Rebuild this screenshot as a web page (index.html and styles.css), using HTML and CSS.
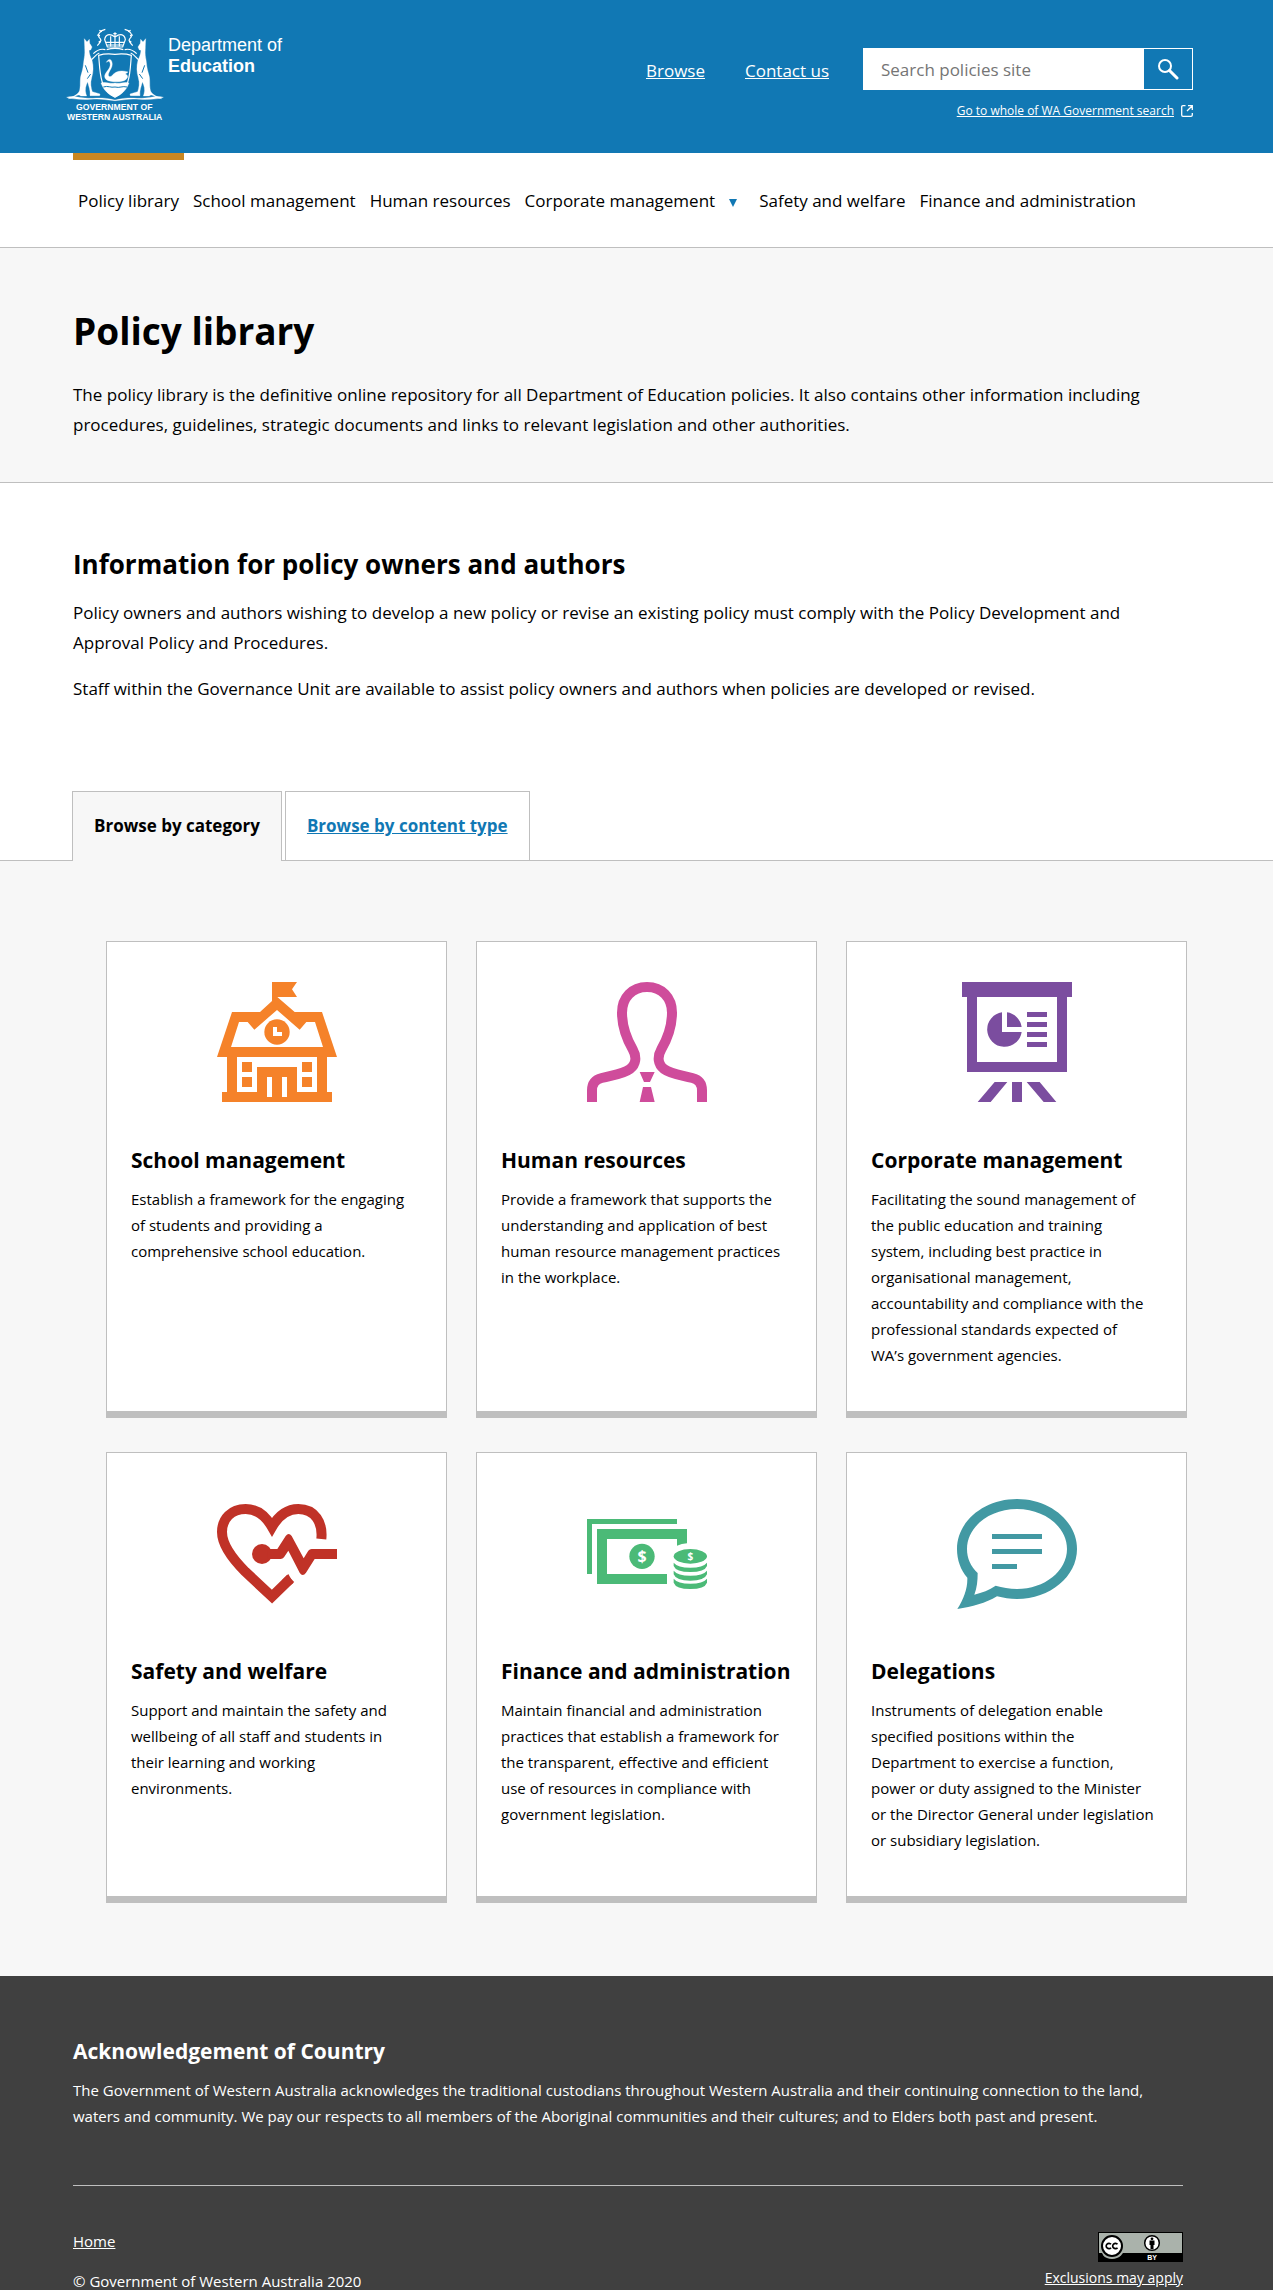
FILE: index.html
```html
<!DOCTYPE html>
<html lang="en">
<head>
<meta charset="utf-8">
<meta name="viewport" content="width=device-width, initial-scale=1">
<title>Policy library - Department of Education</title>
<link rel="stylesheet" href="styles.css">
</head>
<body>
<header class="site-header">
  <a class="brand" href="#" aria-label="Department of Education home">
    <svg class="crest" viewBox="45 50 300 285" fill="none" stroke="#fff">
      <g stroke-width="3.5">
        <path d="M166 57c-18 4-26 18-16 27 8 8-2 14-8 22M156 64l-8-4M150 76l-9-2M154 90l-8 6M224 57c18 4 26 18 16 27-8 8 2 14 8 22M234 64l8-4M240 76l9-2M236 90l8 6"/>
        <path d="M164 88c2-16 14-20 31-8 17-12 29-8 31 8l-8 22h-46zM166 96h58M170 118c16-5 34-5 50 0M172 104h46M195 66v44M182 78v30M208 78v30M190 70h10"/>
        <path d="M146 135c16-5 34-5 49-3 16-2 33-2 49 3-4 46-2 104-49 126-47-22-45-80-49-126z"/>
        <path d="M130 130c12-12 22-16 36-12M260 130c-12-12-22-16-36-12M124 148c8-6 14-16 24-20M266 148c-8-6-14-16-24-20"/>
      </g>
      <g fill="#fff" stroke-width="1">
        <path d="M153 218c20-5 25 4 42 0 17 4 23-5 42 0-8 22-22 35-42 42-20-7-34-20-42-42z"/>
        <path d="M169 208c-10-10-3-18 5-29 8-10 9-20 3-27l-8 4c5-9 12-13 16-3 6 15-5 25-9 36-3 8 1 12 8 9 12-15 27-20 50-13l-8 6c9 4 9 11 1 17-10 9-48 8-58 0z"/>
        <path id="kangaroo" d="M103 85L111 95L118 87L119 99L126 110L122 119L117 120C118 132 121 139 126 150C131 168 130 186 125 202C120 218 123 232 127 244L150 251L149 256L120 256C122 240 116 228 113 214C107 226 104 238 108 251L110 257L92 257C86 251 80 256 70 262L55 265C72 258 85 252 89 240C93 220 88 206 95 188C100 172 100 160 102 148C106 130 104 120 104 108Z"/>
        <use href="#kangaroo" transform="translate(390 0) scale(-1 1)"/>
        <path d="M50 261c20-7 42 4 78 3 36-3 50 2 67 5 17-3 31-8 67-5 36 1 58-10 78-3-15 5-42 8-72 6-30-3-52 3-73 4-21-1-43-7-73-4-30 2-57-1-72-6z"/>
      </g>
      <path d="M160 230c14-5 22 3 35 0 14 4 22-4 36 0M106 165l8 22M112 205l10-14M284 165l-8 22M278 205l-10-14" stroke="#1178b4" stroke-width="3"/>
      <text x="193" y="299" class="crest-text">GOVERNMENT OF</text>
      <text x="194" y="330" class="crest-text">WESTERN AUSTRALIA</text>
    </svg>
    <span class="brand-name">Department of<strong>Education</strong></span>
  </a>
  <div class="header-tools">
    <nav class="header-links" aria-label="Header"><a href="#">Browse</a><a href="#">Contact us</a></nav>
    <div class="search-area">
      <form class="search" role="search">
        <input type="search" placeholder="Search policies site" aria-label="Search policies site">
        <button type="submit" aria-label="Search"><svg width="22" height="22" viewBox="0 0 22 22" fill="none" stroke="#fff"><circle cx="8" cy="8" r="6" stroke-width="2"/><path d="M12.500 12.500L20 20" stroke-width="3" stroke-linecap="round"/></svg></button>
      </form>
      <div class="wider-search"><a href="#">Go to whole of WA Government search</a><svg width="12" height="12" viewBox="0 0 12 12" fill="none" stroke="#fff"><path d="M4.500 .7H2Q.7 .7 .7 2v8q0 1.300 1.300 1.300h8q1.300 0 1.300-1.300V8M7 .7h4.300V5M11.300 .7L6 6" stroke-width="1.300"/></svg></div>
    </div>
  </div>
</header>
<nav class="main-nav" aria-label="Main">
  <a class="current" href="#">Policy library</a><a href="#">School management</a><a href="#">Human resources</a><a href="#">Corporate management<svg class="caret" width="8" height="8" viewBox="0 0 8 8"><path d="M0 0h8L4 8z" fill="#1178b4"/></svg></a><a href="#">Safety and welfare</a><a href="#">Finance and administration</a>
</nav>
<main>
  <section class="intro">
    <h1>Policy library</h1>
    <p>The policy library is the definitive online repository for all Department of Education policies. It also contains other information including procedures, guidelines, strategic documents and links to relevant legislation and other authorities.</p>
  </section>
  <section class="owners">
    <h2>Information for policy owners and authors</h2>
    <p>Policy owners and authors wishing to develop a new policy or revise an existing policy must comply with the Policy Development and Approval Policy and Procedures.</p>
    <p>Staff within the Governance Unit are available to assist policy owners and authors when policies are developed or revised.</p>
  </section>
  <div class="tabs">
    <span class="tab active">Browse by category</span><a class="tab" href="#">Browse by content type</a>
  </div>
  <section class="cards">
    <article class="card">
      <svg class="icon" viewBox="78 66 360 360" fill="#f58229"><path fill-rule="evenodd" d="M243 66h75l-15 22 15 23h-59l52 45h82l45 135h-30v105h15v30H93v-30h15V291H78l45-135h84l36-33zM144 186l-24 75h276l-24-75h-26l-20 23-68-59-68 59-20-23zM138 291v105h60v-75h120v75h60V291z"/><path d="M153 306h30v30h-30zM153 351h30v30h-30zM333 306h30v30h-30zM333 351h30v30h-30z"/><circle cx="258" cy="216" r="38"/><path fill="#fff" d="M246 201h12v15h15v12h-27zM228 351h15v60h-15zM273 351h15v60h-15z"/></svg>
      <h3>School management</h3>
      <p>Establish a framework for the engaging of students and providing a comprehensive school education.</p>
    </article>
    <article class="card">
      <svg class="icon" viewBox="78 66 360 360"><path fill="none" stroke="#cf4c9b" stroke-width="30" d="M93 426v-35c0-20 9-32 29-37 40-10 65-12 85-27 18-14 21-36 8-59-20-35-32-70-32-110 0-45 30-77 75-77s75 32 75 77c0 40-12 75-32 110-13 23-10 45 8 59 20 15 45 17 85 27 20 5 29 17 29 37v35"/><path fill="#cf4c9b" d="M236 336h45l-14 30h-18zM246 381h24l11 45h-45z"/></svg>
      <h3>Human resources</h3>
      <p>Provide a framework that supports the understanding and application of best human resource management practices in the workplace.</p>
    </article>
    <article class="card">
      <svg class="icon" viewBox="78 66 360 360" fill="#7b4d9f"><path fill-rule="evenodd" d="M93 66h330v45h-15v225H108V111H93zM138 111v195h240V111z"/><path d="M288 156h60v15h-60zM288 186h60v15h-60zM288 216h60v15h-60zM288 246h60v15h-60zM213 157v59h59a52 52 0 1 1-59-59zM228 157a52 52 0 0 1 44 44h-44zM191 366h38l-50 60h-39zM243 366h30v60h-30zM287 366h39l50 60h-38z"/></svg>
      <h3>Corporate management</h3>
      <p>Facilitating the sound management of the public education and training system, including best practice in organisational management, accountability and compliance with the professional standards expected of WA’s&nbsp;government agencies.</p>
    </article>
    <article class="card">
      <svg class="icon" viewBox="78 36 360 360" fill="#c03227"><path fill="none" stroke="#c03227" stroke-width="30" d="M391 174c5-49-19-90-69-90-35 0-60 21-79 54-19-33-44-54-79-54-43 0-71 29-71 69 0 44 39 88 70 119l80 75 56-55"/><path d="M292 279l15 27-16 12-18-20z"/><circle cx="213" cy="219" r="30"/><path d="M230 204h29l25-39q9-12 18 0l36 67 14-23q4-5 10-5h76v30h-67l-26 41q-10 14-19 0l-34-66-13 20q-4 5-10 5h-39z"/></svg>
      <h3>Safety and welfare</h3>
      <p>Support and maintain the safety and wellbeing of all staff and students in their learning and working environments.</p>
    </article>
    <article class="card">
      <svg class="icon" viewBox="78 36 360 360" fill="#4bba77"><path d="M78 114h270v15H93v150H78zM108 144h270v43q-16 1-30 7v-20H138v105h180v30H108z"/><circle cx="243" cy="226" r="38"/><ellipse cx="388" cy="226" rx="50" ry="22"/><path d="M338 245q12 15 50 15t50-15v10q-7 18-50 18t-50-18zM338 269q12 15 50 15t50-15v11q-7 19-50 19t-50-19zM338 293q12 15 50 15t50-15v12q-7 19-50 19t-50-19z"/><text class="dollar" x="243" y="244">$</text><text class="dollar small" x="388" y="236">$</text></svg>
      <h3>Finance and administration</h3>
      <p>Maintain financial and administration practices that establish a framework for the transparent, effective and efficient use of resources in compliance with government legislation.</p>
    </article>
    <article class="card">
      <svg class="icon" viewBox="78 36 360 360" fill="#4299a3"><path fill-rule="evenodd" d="M258 54c99 0 180 67 180 150s-81 150-180 150c-21 0-41-3-60-8-34 21-74 31-119 38 19-30 31-61 30-94C89 267 78 237 78 204 78 121 159 54 258 54zM258 84c-83 0-150 54-150 120 0 28 11 52 32 72 0 24-2 44-10 65 24-6 44-14 64-27 20 5 41 10 64 10 83 0 150-54 150-120S341 84 258 84z"/><path d="M183 159h150v15H183zM183 204h150v15H183zM183 249h75v15h-75z"/></svg>
      <h3>Delegations</h3>
      <p>Instruments of delegation enable specified positions within the Department to exercise a function, power or duty assigned to the Minister or the Director General under legislation or subsidiary legislation.</p>
    </article>
  </section>
</main>
<footer class="site-footer">
  <section class="acknowledgement">
    <h3>Acknowledgement of Country</h3>
    <p>The Government of Western Australia acknowledges the traditional custodians throughout Western Australia and their continuing connection to the land, waters and community. We pay our respects to all members of the Aboriginal communities and their cultures; and to Elders both past and present.</p>
  </section>
  <div class="footer-bottom">
    <div class="footer-left"><a href="#">Home</a><span>© Government of Western Australia 2020</span></div>
    <div class="footer-right">
      <svg width="85" height="30" viewBox="0 0 85 30"><path fill="#000" d="M0 0h85v30H0z"/><path fill="#aab2ab" d="M1 1h83v20H1z"/><circle cx="14" cy="14" r="13" fill="#aab2ab"/><path fill="#000" d="M1 21h3l2 4H1z"/><circle cx="14" cy="14" r="10" fill="#fff" stroke="#000" stroke-width="2"/><path d="M13 12.300a2.700 2.700 0 1 0 0 3.400M19.500 12.300a2.700 2.700 0 1 0 0 3.400" fill="none" stroke="#000" stroke-width="1.700"/><circle cx="54" cy="11" r="7.300" fill="#fff" stroke="#000" stroke-width="1.500"/><circle cx="54" cy="6.800" r="1.400"/><path d="M51.500 8.500h5V13h-1v4h-3v-4h-1z"/><text class="by" x="54" y="28">BY</text></svg>
      <a href="#">Exclusions may apply</a>
    </div>
  </div>
</footer>
</body>
</html>
```
FILE: styles.css
```css
* { box-sizing: border-box; }
body { margin: 0; font-family: "Open Sans", sans-serif; font-size: 17px; line-height: 30px; color: #000; background: #fff; }
h1, h2, h3, p { margin: 0; }
a { color: inherit; }

.site-header { display: flex; justify-content: space-between; align-items: flex-start; min-height: 153px; padding: 27px 80px 0 65px; background: #1178b4; color: #fff; }
.brand { display: flex; gap: 3px; text-decoration: none; }
.crest { width: 100px; height: 95px; }
.crest-text { fill: #fff; stroke: none; font: bold 26px "Liberation Sans", sans-serif; text-anchor: middle; }
.brand-name { padding-top: 8px; font: 18px/21px "Liberation Sans", sans-serif; }
.brand-name strong { display: block; }
.header-tools { display: flex; gap: 34px; padding-top: 21px; }
.header-links { display: flex; gap: 40px; padding-top: 8px; }
.search-area { width: 330px; }
.search { display: flex; height: 42px; border: 1px solid #fff; }
.search input { flex: 1; min-width: 0; padding: 0 17px; border: 0; border-radius: 0; background: #fff; font: 17px "Open Sans", sans-serif; }
.search input::placeholder { color: #757575; }
.search button { display: flex; justify-content: center; align-items: center; width: 48px; padding: 0; border: 0; background: #1178b4; }
.wider-search { display: flex; justify-content: flex-end; align-items: center; gap: 7px; height: 42px; font-size: 12px; white-space: nowrap; }

.main-nav { display: flex; gap: 4px; height: 95px; padding: 0 73px; border-bottom: 1px solid #bfbfbf; white-space: nowrap; }
.main-nav a { padding: 33px 5px 0; text-decoration: none; }
.main-nav .current { border-top: 7px solid #c98722; padding-top: 26px; }
.caret { margin: 0 8px 0 14px; }

.intro { padding: 59px 90px 42px 73px; border-bottom: 1px solid #bfbfbf; background: #f7f7f7; }
h1 { margin-bottom: 25px; font-size: 37px; line-height: 48px; }
.owners { padding: 63px 90px 87px 73px; }
h2 { margin-bottom: 16px; font-size: 26px; line-height: 36px; }
.owners p + p { margin-top: 16px; }

.tabs { display: flex; gap: 3px; padding: 0 72px; border-bottom: 1px solid #bfbfbf; }
.tab { height: 69px; padding: 19px 21px; border: 1px solid #bfbfbf; border-bottom: 0; font-weight: bold; color: #1178b4; }
.tab.active { height: 70px; margin-bottom: -1px; background: #f7f7f7; color: #000; }

.cards { display: grid; grid-template-columns: repeat(3, 1fr); gap: 34px 29px; padding: 80px 86px 73px 106px; background: #f7f7f7; }
.card { padding: 40px 24px 43px; border: 1px solid #bfbfbf; border-bottom: 7px solid #bfbfbf; background: #fff; font-size: 15px; line-height: 26px; }
.card p { padding-right: 6px; }
.icon { display: block; width: 120px; height: 120px; margin: 0 auto 44px; }
h3 { margin-bottom: 12px; font-size: 21px; line-height: 28px; }
.dollar { fill: #fff; font: bold 48px "Open Sans", sans-serif; text-anchor: middle; }
.dollar.small { font-size: 30px; }

.site-footer { padding: 61px 90px 0 73px; background: #404040; color: #fff; font-size: 15px; line-height: 26px; }
.acknowledgement { padding-bottom: 56px; border-bottom: 1px solid #bfbfbf; }
.footer-bottom { display: flex; justify-content: space-between; align-items: center; padding-top: 46px; }
.footer-left { display: flex; flex-direction: column; gap: 24px; line-height: 16px; }
.footer-right { display: flex; flex-direction: column; align-items: flex-end; gap: 4px; font-size: 14px; line-height: 24px; }
.by { fill: #fff; font: bold 7px "Liberation Sans", sans-serif; text-anchor: middle; }
```
